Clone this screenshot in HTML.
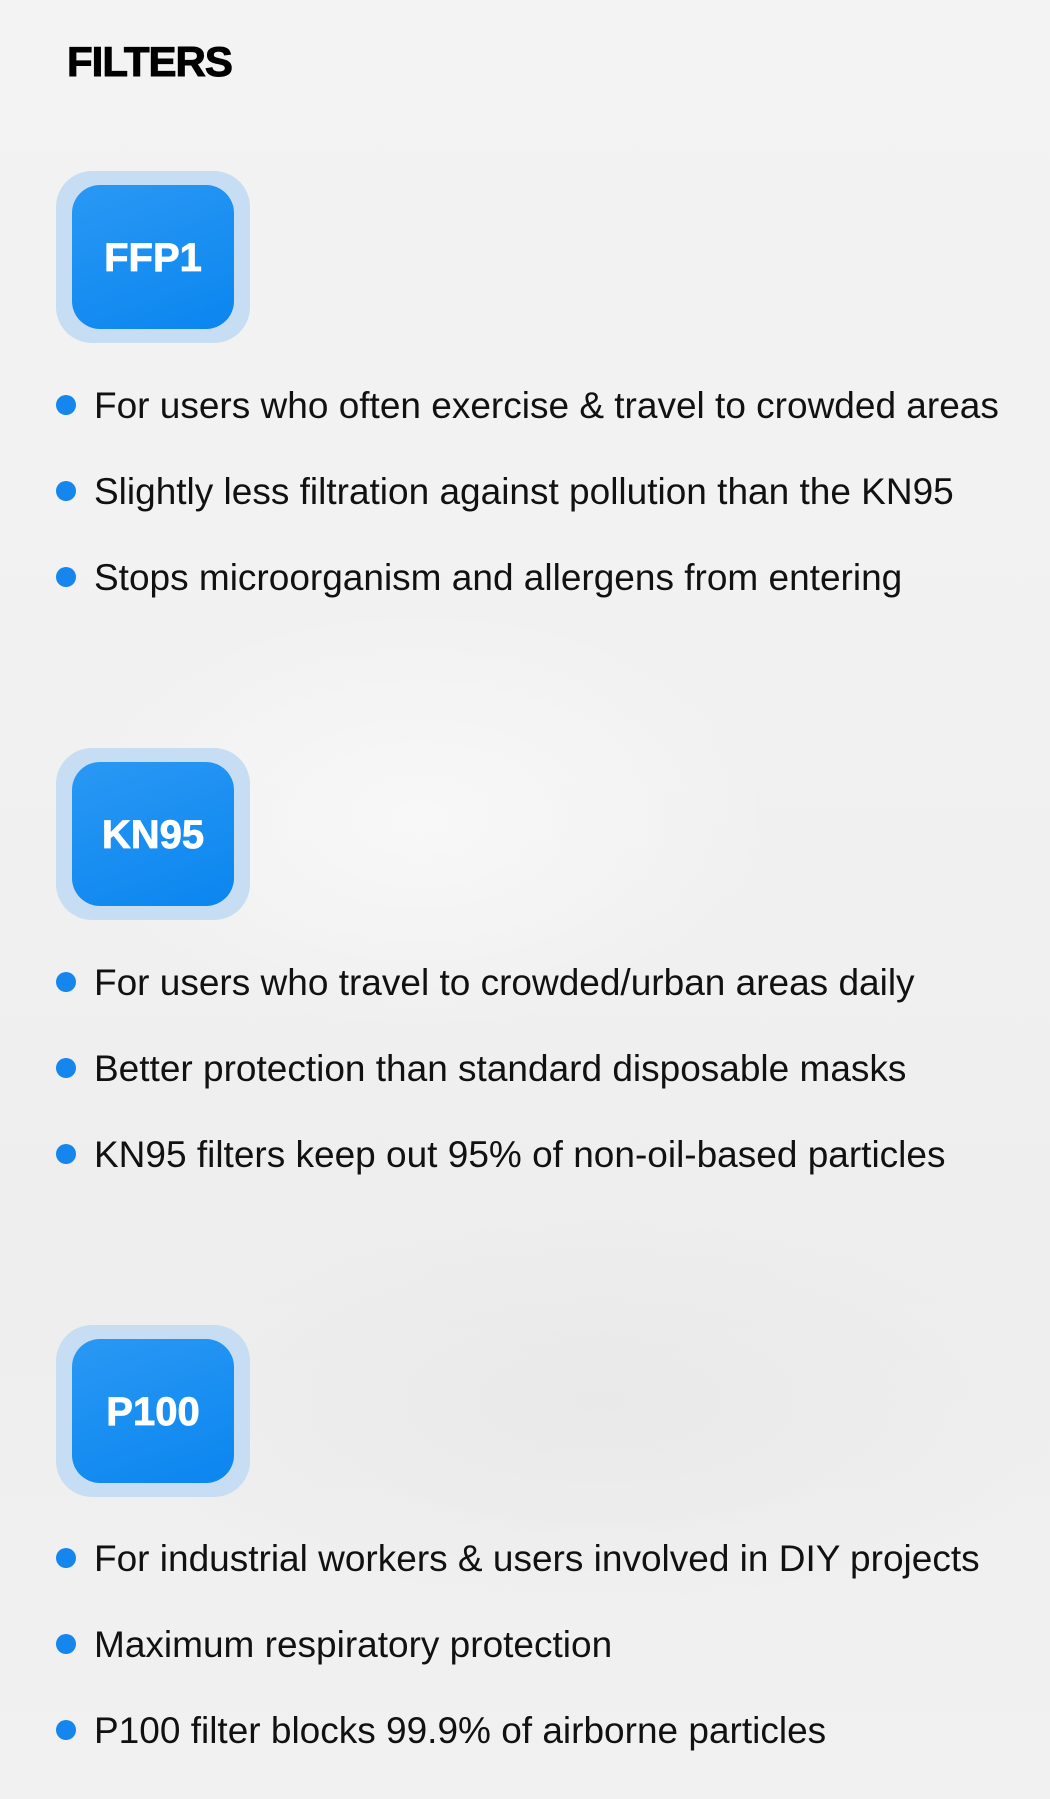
<!DOCTYPE html>
<html><head><meta charset="utf-8"><style>
html,body{margin:0;padding:0}
body{width:1050px;height:1799px;overflow:hidden;position:relative;font-family:"Liberation Sans",sans-serif;
background:radial-gradient(ellipse 500px 300px at 420px 820px,#f8f8f8,rgba(248,248,248,0) 70%),
radial-gradient(ellipse 700px 300px at 600px 1400px,#e9e9e9,rgba(233,233,233,0) 70%),
linear-gradient(180deg,#f3f3f3 0%,#f1f1f1 40%,#eeeeee 70%,#f1f1f1 100%);}
h1{position:absolute;left:67px;top:38px;margin:0;font-size:42px;font-weight:bold;letter-spacing:-1px;color:#000;-webkit-text-stroke:1px #000}
.badge{position:absolute;left:56px;width:194px;height:172px;border-radius:36px;background:#c6ddf3}
.badge div{position:absolute;left:16px;top:14px;width:162px;height:144px;border-radius:28px;
background:linear-gradient(160deg,#2a98f4,#0a86ef);color:#fff;font-weight:bold;font-size:40px;
display:flex;align-items:center;justify-content:center;letter-spacing:0;padding-top:3px;box-sizing:border-box;-webkit-text-stroke:0.8px #fff}
.li{position:absolute;left:56px;font-size:37px;color:#111;white-space:nowrap;line-height:40px}
.li:before{content:"";display:inline-block;width:20px;height:20px;border-radius:50%;background:#1486ee;margin-right:18px;vertical-align:3px}
</style></head><body>
<h1>FILTERS</h1>

<div class="badge" style="top:171px"><div>FFP1</div></div>
<div class="li" style="top:386px">For users who often exercise &amp; travel to crowded areas</div>
<div class="li" style="top:472px">Slightly less filtration against pollution than the KN95</div>
<div class="li" style="top:558px">Stops microorganism and allergens from entering</div>

<div class="badge" style="top:748px"><div>KN95</div></div>
<div class="li" style="top:963px">For users who travel to crowded/urban areas daily</div>
<div class="li" style="top:1049px">Better protection than standard disposable masks</div>
<div class="li" style="top:1135px">KN95 filters keep out 95% of non-oil-based particles</div>

<div class="badge" style="top:1325px"><div>P100</div></div>
<div class="li" style="top:1539px">For industrial workers &amp; users involved in DIY projects</div>
<div class="li" style="top:1625px">Maximum respiratory protection</div>
<div class="li" style="top:1711px">P100 filter blocks 99.9% of airborne particles</div>
</body></html>
